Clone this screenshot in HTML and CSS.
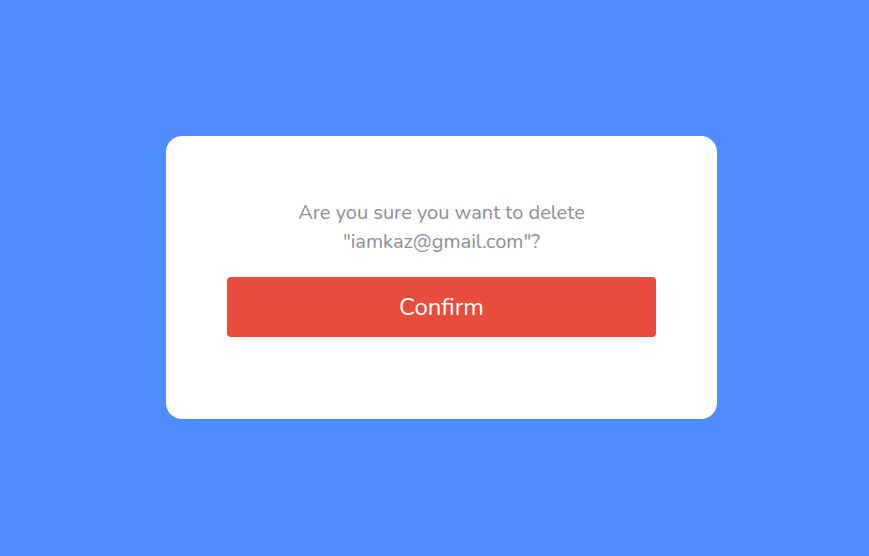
FILE: index.html
```html
<!DOCTYPE html>
<html>
<head>
<meta charset="utf-8">
<link rel="stylesheet" href="styles.css">
</head>
<body>
<main class="stage">
  <section class="card">
    <p class="message">Are you sure you want to delete<br>"iamkaz@gmail.com"?</p>
    <button class="confirm">Confirm</button>
  </section>
</main>
</body>
</html>
```
FILE: styles.css
```css
html, body {
  margin: 0;
  padding: 0;
  height: 100%;
}
body {
  background: #4f8cfd;
  font-family: "Nunito", "Lato", "Open Sans", sans-serif;
}
.stage {
  height: 100%;
  display: flex;
  align-items: center;
  justify-content: center;
  padding-left: 14px;
  padding-bottom: 1px;
  box-sizing: border-box;
}
.card {
  width: 551px;
  height: 283px;
  box-sizing: border-box;
  background: #ffffff;
  border-radius: 16px;
  padding: 62px 61px 0;
  display: flex;
  flex-direction: column;
  align-items: stretch;
}
.message {
  margin: 0 0 21px;
  text-align: center;
  color: #8c8d98;
  font-size: 20px;
  line-height: 29px;
}
.confirm {
  height: 60px;
  border: none;
  border-radius: 4px;
  background: #e74c3c;
  color: #ffffff;
  font-family: inherit;
  font-size: 24px;
  cursor: pointer;
}
```
